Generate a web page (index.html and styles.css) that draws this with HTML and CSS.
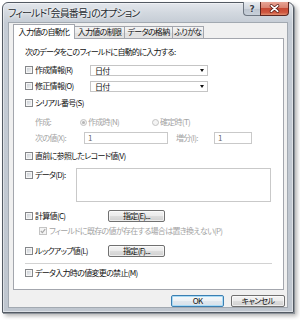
FILE: index.html
```html
<!DOCTYPE html>
<html lang="ja">
<head>
<meta charset="utf-8">
<title>フィールド「会員番号」のオプション</title>
<link rel="stylesheet" href="styles.css">
</head>
<body>
<div class="window">
  <div class="titlebar">
    <span class="title">フィールド「会員番号」のオプション</span>
    <div class="caps">
      <span class="cap help">?</span>
      <span class="cap close"><svg width="29" height="13" viewBox="0 0 29 13"><path d="M11 3.5 L18 9.5 M18 3.5 L11 9.5" stroke="#5a1d16" stroke-width="3.4" stroke-linecap="round"/><path d="M11 3.5 L18 9.5 M18 3.5 L11 9.5" stroke="#fff" stroke-width="1.8" stroke-linecap="round"/></svg></span>
    </div>
  </div>
  <div class="client">
    <div class="tabs">
      <div class="tab active">入力値の自動化</div>
      <div class="tab t2">入力値の制限</div>
      <div class="tab t3">データの格納</div>
      <div class="tab t4">ふりがな</div>
    </div>
    <div class="panel">
      <div class="row intro">次のデータをこのフィールドに自動的に入力する:</div>
      <div class="row mt6"><span class="cb"></span><span class="lbl w55">作成情報(R)</span><span class="combo">日付<i class="arrow"></i></span></div>
      <div class="row mt4"><span class="cb"></span><span class="lbl w55">修正情報(O)</span><span class="combo">日付<i class="arrow"></i></span></div>
      <div class="row mt5"><span class="cb"></span><span class="lbl">シリアル番号(S)</span></div>
      <div class="row mt7 indent dis"><span class="w45">作成:</span><span class="radio on"></span><span class="opt">作成時(N)</span><span class="radio"></span><span class="opt2">確定時(T)</span></div>
      <div class="row mt4 indent dis"><span class="w49">次の値(X):</span><span class="field w84">1</span><span class="w38 ml8">増分(I):</span><span class="field w38b">1</span></div>
      <div class="row mt6"><span class="cb"></span><span class="lbl">直前に参照したレコード値(V)</span></div>
      <div class="row mt6 top"><span class="cb cbtop"></span><span class="lbl w41 lbltop">データ(D):</span><span class="area"></span></div>
      <div class="row mt8"><span class="cb"></span><span class="lbl w73">計算値(C)</span><span class="btn spec">指定(E)...</span></div>
      <div class="row mt3 sub dis"><span class="cb checked"><svg width="6" height="6" viewBox="0 0 6 6"><path d="M0.8 3 L2.4 4.6 L5.2 1.2" fill="none" stroke="#a9a9a9" stroke-width="1.2"/></svg></span><span class="lbl">フィールドに既存の値が存在する場合は置き換えない(P)</span></div>
      <div class="row mt8"><span class="cb"></span><span class="lbl w73">ルックアップ値(L)</span><span class="btn spec">指定(F)...</span></div>
      <div class="sep"></div>
      <div class="row mt3"><span class="cb"></span><span class="lbl">データ入力時の値変更の禁止(M)</span></div>
    </div>
    <div class="btnrow">
      <span class="btn ok">OK</span>
      <span class="btn cancel">キャンセル</span>
    </div>
  </div>
</div>
</body>
</html>
```
FILE: styles.css
```css
html, body {
  margin: 0;
  padding: 0;
  background: #ffffff;
}
body {
  font-family: "Noto Sans CJK JP", "Noto Sans", sans-serif;
  font-size: 8px;
  font-feature-settings: "palt";
  letter-spacing: -0.7px;
  color: #111111;
  width: 300px;
  height: 320px;
  overflow: hidden;
}
.window {
  margin: 2px 0 0 2px;
  width: 292px;
  height: 311px;
  box-sizing: border-box;
  border: 1px solid #535a63;
  border-radius: 6px 6px 0 0;
  background: linear-gradient(to bottom, #e3e7ec 0, #d2d8df 10px, #c5ccd5 20px, #bfc6cf 100%);
  box-shadow: inset 0 0 0 1px rgba(255,255,255,0.45), 1px 1px 0 #8d939a, 3px 3px 4px rgba(0,0,0,0.3);
  padding: 0 5px 4px 5px;
  display: flex;
  flex-direction: column;
}
.titlebar {
  height: 19px;
  display: flex;
  align-items: center;
  margin-right: -1px;
}
.title {
  flex: 1;
  font-size: 10px;
  letter-spacing: -0.9px;
  color: #262b31;
  text-shadow: 0 0 4px #fff, 0 0 2px #fff;
}
.caps {
  align-self: flex-start;
  display: flex;
  flex: none;
  margin-top: -1px;
}
.cap {
  height: 14px;
  flex: none;
  box-sizing: border-box;
  display: flex;
  align-items: center;
  justify-content: center;
}
.help {
  width: 17px;
  border: 1px solid #6e7782;
  border-top: none;
  border-right: none;
  border-radius: 0 0 0 4px;
  background: linear-gradient(to bottom, #e6eaef 0, #d0d6de 50%, #bcc4ce 51%, #c8d0da 100%);
  font-size: 9px;
  font-weight: bold;
  letter-spacing: 0;
  color: #3b4048;
  text-shadow: 0 0 2px #fff;
  font-family: "DejaVu Sans", sans-serif;
}
.close {
  width: 29px;
  border: 1px solid #5e2620;
  border-top: none;
  border-radius: 0 0 4px 0;
  background: linear-gradient(to bottom, #e8a596 0, #d9816f 45%, #c74a35 50%, #d0573f 80%, #e08e70 100%);
}
.close svg { display: block; }
.client {
  flex: 1;
  background: #f0f0f0;
  border: 1px solid #a2a9b1;
  padding: 0 3px 0 4px;
  display: flex;
  flex-direction: column;
}
.tabs {
  height: 15px;
  display: flex;
  align-items: flex-end;
}
.tab {
  height: 12px;
  box-sizing: border-box;
  border: 1px solid #a3a6ad;
  border-bottom: none;
  background: linear-gradient(to bottom, #f4f4f4 0, #ebebeb 50%, #dedede 51%, #e4e4e4 100%);
  line-height: 10px;
  text-align: center;
  margin-left: -1px;
  white-space: nowrap;
}
.tab.active {
  width: 62px;
  height: 15px;
  margin-left: 0;
  margin-bottom: -1px;
  background: #ffffff;
  line-height: 13px;
  position: relative;
  z-index: 1;
}
.t2 { width: 51px; }
.t3 { width: 49px; }
.t4 { width: 32px; }
.panel {
  width: 271px;
  height: 252px;
  box-sizing: border-box;
  border: 1px solid #a3a6ad;
  background: #ffffff;
  padding: 7px 0 0 11px;
}
.row {
  height: 12px;
  line-height: 12px;
  display: flex;
  align-items: center;
  white-space: nowrap;
}
.row.top { align-items: flex-start; height: 34px; }
.mt3 { margin-top: 3px; }
.mt4 { margin-top: 4px; }
.mt5 { margin-top: 5px; }
.mt6 { margin-top: 6px; }
.mt7 { margin-top: 7px; }
.mt8 { margin-top: 8px; }
.indent { padding-left: 10px; }
.sub { padding-left: 14px; }
.dis { color: #a3a3a3; }
.cb {
  width: 8px;
  height: 8px;
  flex: none;
  box-sizing: border-box;
  border: 1px solid #85878a;
  background: linear-gradient(135deg, #c4c8ce 0, #e3e6e9 60%, #f8f8f8 100%);
  box-shadow: inset 0 0 0 1px #f6f6f6;
}
.cb.cbtop { margin-top: 3px; }
.cb.checked {
  border-color: #c4c4c4;
  background: #f4f4f4;
  box-shadow: none;
  display: flex;
  align-items: center;
  justify-content: center;
}
.cb.checked svg { display: block; }
.lbl { margin-left: 2px; }
.lbltop { margin-top: 1px; }
.w55 { width: 55px; }
.w41 { width: 41px; }
.w73 { width: 73px; }
.w45 { width: 45px; }
.w49 { width: 49px; }
.w38 { width: 38px; }
.ml8 { margin-left: 8px; }
.combo {
  width: 118px;
  height: 11px;
  box-sizing: border-box;
  border: 1px solid #c5c5c5;
  background: #fff;
  padding-left: 4px;
  line-height: 9px;
  color: #111;
  display: flex;
  align-items: center;
  justify-content: space-between;
  padding-right: 3px;
}
.arrow {
  width: 0;
  height: 0;
  border-left: 2.5px solid transparent;
  border-right: 2.5px solid transparent;
  border-top: 3px solid #111;
}
.radio {
  width: 7px;
  height: 7px;
  flex: none;
  box-sizing: border-box;
  border: 1px solid #c3c3c3;
  border-radius: 50%;
  background: #f4f4f4;
  display: flex;
  align-items: center;
  justify-content: center;
}
.radio.on::after {
  content: "";
  width: 3px;
  height: 3px;
  border-radius: 50%;
  background: #b5b5b5;
}
.opt { margin-left: 1px; width: 64px; }
.opt2 { margin-left: 1px; }
.field {
  height: 12px;
  box-sizing: border-box;
  border: 1px solid #c9c9c9;
  background: #fff;
  padding-left: 3px;
  line-height: 10px;
  color: #6a6a6a;
}
.w84 { width: 84px; }
.w38b { width: 38px; }
.area {
  width: 195px;
  height: 34px;
  box-sizing: border-box;
  border: 1px solid #c9c9c9;
  background: #fff;
}
.btn {
  height: 12px;
  box-sizing: border-box;
  border: 1px solid #707070;
  border-radius: 2px;
  background: linear-gradient(to bottom, #f3f3f3 0, #ebebeb 50%, #dddddd 51%, #d0d0d0 100%);
  box-shadow: inset 0 0 0 1px rgba(255,255,255,0.6);
  display: flex;
  align-items: center;
  justify-content: center;
  line-height: 10px;
  color: #111;
}
.spec { width: 57px; }
.sep {
  width: 247px;
  height: 0;
  border-top: 1px solid #d2d2d2;
  margin-top: 6px;
}
.btnrow {
  display: flex;
  justify-content: flex-end;
  gap: 7px;
  margin-top: 5px;
  margin-right: -1px;
}
.btnrow .btn { width: 54px; }
.btnrow .ok {
  width: 53px;
  border-color: #3c7fb1;
  box-shadow: inset 0 0 0 1px #a9dbf6;
  background: linear-gradient(to bottom, #f6f9fb 0, #ecf1f5 50%, #e0e7ee 51%, #d9e2ea 100%);
}
```
